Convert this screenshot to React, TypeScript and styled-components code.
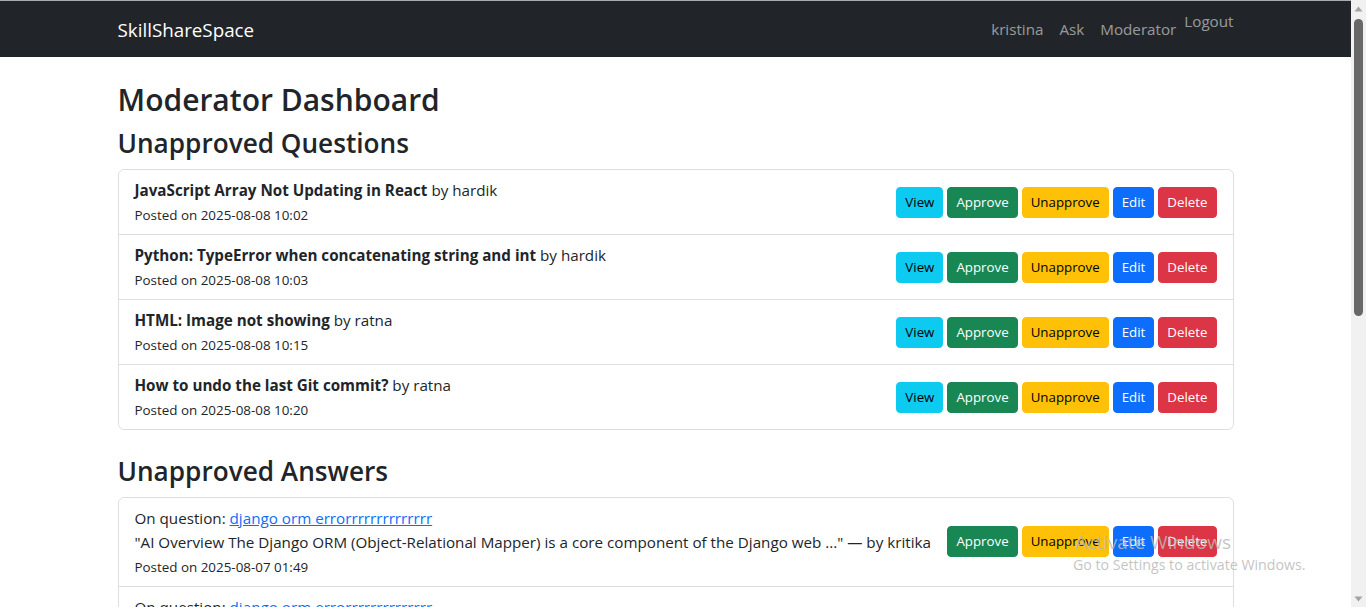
import React from "react";
import styled, { createGlobalStyle } from "styled-components";

const FONT = "'Open Sans', 'Noto Sans', sans-serif";

const GlobalStyle = createGlobalStyle`
  html, body { margin: 0; padding: 0; overflow: hidden; background: #fff; }
  body { font-family: ${FONT}; color: #212529; -webkit-font-smoothing: antialiased; }
  *, *::before, *::after { box-sizing: border-box; }
`;

const Frame = styled.div`
  position: relative;
  display: flex;
  width: 1366px;
  height: 607px;
  overflow: hidden;
`;

const Page = styled.div`
  flex: 0 0 1351px;
  height: 607px;
  overflow: hidden;
  border-top: 1px solid #a9abae;
`;

const Navbar = styled.nav`
  background: #212529;
  height: 56px;
`;

const NavInner = styled.div`
  max-width: 1140px;
  margin: 0 auto;
  padding: 8px 12px;
  display: flex;
  justify-content: space-between;
  align-items: flex-start;
`;

const Brand = styled.a`
  display: block;
  padding: 6px 0 4px;
  font-size: 18.8px;
  line-height: 30px;
  color: #fff;
  text-decoration: none;
`;

const NavList = styled.div`
  display: flex;
  align-items: flex-start;
`;

const NavLink = styled.a<{ $flush?: boolean }>`
  display: block;
  padding: ${(p) => (p.$flush ? "0" : "8px")};
  font-size: 15.2px;
  line-height: 24px;
  color: rgba(255, 255, 255, 0.55);
  text-decoration: none;
`;

const Container = styled.main`
  max-width: 1140px;
  margin: 0 auto;
  padding: 24px 12px 0;
`;

const H1 = styled.h1`
  margin: 0 0 8px;
  font-size: 30px;
  line-height: 38.4px;
  font-weight: 600;
`;

const H2 = styled.h2`
  margin: 0 0 8px;
  font-size: 26.2px;
  line-height: 33.6px;
  font-weight: 600;
`;

const Card = styled.ul`
  list-style: none;
  margin: 0 0 25px;
  padding: 0;
  border: 1px solid rgba(0, 0, 0, 0.125);
  border-radius: 6px;
`;

const Item = styled.li`
  display: flex;
  justify-content: space-between;
  align-items: center;
  gap: 4px;
  padding: 8px 16px;
  font-size: 15.2px;
  line-height: 24px;
  & + & {
    border-top: 1px solid rgba(0, 0, 0, 0.125);
  }
`;

const TextCol = styled.div`
  min-width: 0;
  white-space: nowrap;
`;

const Line = styled.div`
  height: 24px;
  overflow: visible;
`;

const Title = styled.strong`
  font-weight: 700;
`;

const Small = styled.small`
  font-size: 13.4px;
  line-height: 20px;
`;

const Link = styled.a`
  color: #0d6efd;
  text-decoration: underline;
`;

const Actions = styled.div`
  display: flex;
  gap: 4px;
  flex-shrink: 0;
`;

const variants = {
  info: { bg: "#0dcaf0", fg: "#000" },
  success: { bg: "#198754", fg: "#fff" },
  warning: { bg: "#ffc107", fg: "#000" },
  primary: { bg: "#0d6efd", fg: "#fff" },
  danger: { bg: "#dc3545", fg: "#fff" },
};
type Variant = keyof typeof variants;

const Btn = styled.button<{ $v: Variant }>`
  font-family: ${FONT};
  font-size: 13.3px;
  line-height: 21px;
  padding: 4px 8px;
  border: 1px solid ${(p) => variants[p.$v].bg};
  border-radius: 4px;
  background: ${(p) => variants[p.$v].bg};
  color: ${(p) => variants[p.$v].fg};
  cursor: pointer;
`;

const Scrollbar = styled.div`
  flex: 0 0 15px;
  height: 607px;
  background: #f1f1f1;
  display: flex;
  flex-direction: column;
  align-items: center;
`;

const ArrowBox = styled.div`
  height: 17px;
  width: 15px;
  display: flex;
  align-items: center;
  justify-content: center;
`;

const Thumb = styled.div`
  width: 9px;
  height: 297px;
  margin-top: 2px;
  border-radius: 5px;
  background: #686868;
`;

const Spacer = styled.div`
  flex: 1;
`;

const Watermark = styled.div`
  position: absolute;
  left: 1073px;
  top: 528px;
  color: rgba(185, 185, 185, 0.85);
  pointer-events: none;
`;

const WmTitle = styled.div`
  font-size: 19px;
  line-height: 28px;
  padding-left: 2px;
`;

const WmSub = styled.div`
  font-size: 14.2px;
  line-height: 18px;
`;

type Q = { title: string; by: string; posted: string };
const questions: Q[] = [
  { title: "JavaScript Array Not Updating in React", by: "hardik", posted: "2025-08-08 10:02" },
  { title: "Python: TypeError when concatenating string and int", by: "hardik", posted: "2025-08-08 10:03" },
  { title: "HTML: Image not showing", by: "ratna", posted: "2025-08-08 10:15" },
  { title: "How to undo the last Git commit?", by: "ratna", posted: "2025-08-08 10:20" },
];

type A = { question: string; text: string; by: string; posted: string };
const answers: A[] = [
  {
    question: "django orm errorrrrrrrrrrrrrr",
    text: "AI Overview The Django ORM (Object-Relational Mapper) is a core component of the Django web ...",
    by: "kritika",
    posted: "2025-08-07 01:49",
  },
  {
    question: "django orm errorrrrrrrrrrrrrr",
    text: "The Django ORM lets you interact with your database using Python objects instead of raw SQL ...",
    by: "kritika",
    posted: "2025-08-07 01:52",
  },
];

export default function App() {
  return (
    <Frame>
      <GlobalStyle />
      <Page>
        <Navbar>
          <NavInner>
            <Brand href="#">SkillShareSpace</Brand>
            <NavList>
              <NavLink href="#">kristina</NavLink>
              <NavLink href="#">Ask</NavLink>
              <NavLink href="#">Moderator</NavLink>
              <NavLink href="#" $flush>
                Logout
              </NavLink>
            </NavList>
          </NavInner>
        </Navbar>
        <Container>
          <H1>Moderator Dashboard</H1>
          <H2>Unapproved Questions</H2>
          <Card>
            {questions.map((q) => (
              <Item key={q.title}>
                <TextCol>
                  <Line>
                    <Title>{q.title}</Title> by {q.by}
                  </Line>
                  <Line>
                    <Small>Posted on {q.posted}</Small>
                  </Line>
                </TextCol>
                <Actions>
                  <Btn $v="info">View</Btn>
                  <Btn $v="success">Approve</Btn>
                  <Btn $v="warning">Unapprove</Btn>
                  <Btn $v="primary">Edit</Btn>
                  <Btn $v="danger">Delete</Btn>
                </Actions>
              </Item>
            ))}
          </Card>
          <H2>Unapproved Answers</H2>
          <Card>
            {answers.map((a, i) => (
              <Item key={i}>
                <TextCol>
                  <Line>
                    On question: <Link href="#">{a.question}</Link>
                  </Line>
                  <Line>
                    "{a.text}" — by {a.by}
                  </Line>
                  <Line>
                    <Small>Posted on {a.posted}</Small>
                  </Line>
                </TextCol>
                <Actions>
                  <Btn $v="success">Approve</Btn>
                  <Btn $v="warning">Unapprove</Btn>
                  <Btn $v="primary">Edit</Btn>
                  <Btn $v="danger">Delete</Btn>
                </Actions>
              </Item>
            ))}
          </Card>
        </Container>
      </Page>
      <Scrollbar>
        <ArrowBox>
          <svg width="9" height="6" viewBox="0 0 9 6">
            <path d="M4.5 0.5 L8.5 5.5 L0.5 5.5 Z" fill="#a3a3a3" />
          </svg>
        </ArrowBox>
        <Thumb />
        <Spacer />
        <ArrowBox>
          <svg width="9" height="6" viewBox="0 0 9 6">
            <path d="M0.5 0.5 L8.5 0.5 L4.5 5.5 Z" fill="#a3a3a3" />
          </svg>
        </ArrowBox>
      </Scrollbar>
      <Watermark>
        <WmTitle>Activate Windows</WmTitle>
        <WmSub>Go to Settings to activate Windows.</WmSub>
      </Watermark>
    </Frame>
  );
}
